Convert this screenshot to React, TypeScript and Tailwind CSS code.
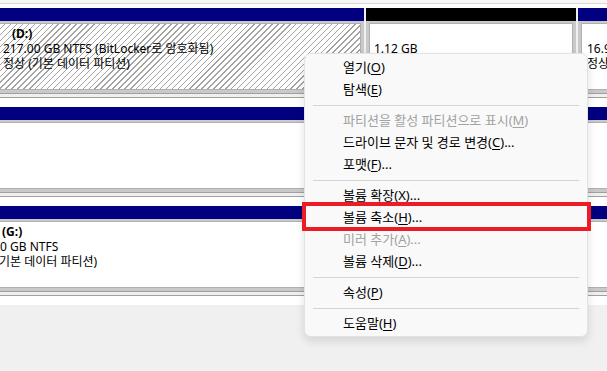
import React from "react";

const font = "font-['Noto_Sans','Noto_Sans_CJK_KR',sans-serif]";

function Partition({
  bar,
  className = "",
  hatched = false,
  children,
}: {
  bar: string;
  className?: string;
  hatched?: boolean;
  children?: React.ReactNode;
}) {
  return (
    <div className={`flex flex-col ${className}`}>
      <div className={`h-[13px] ${bar}`} />
      <div className="flex h-[72px] flex-col bg-[#c9c9c9] px-[3px] pt-[2px] pb-[3px]">
        <div
          className={`flex-1 overflow-hidden border border-[#b0b0b0] ${
            hatched
              ? "bg-[repeating-linear-gradient(135deg,#fff_0px,#fff_3.2px,#a2a2a2_3.2px,#a2a2a2_4.2px)]"
              : "bg-white"
          }`}
        >
          {children}
        </div>
      </div>
    </div>
  );
}

function DiskRow({ children }: { children: React.ReactNode }) {
  return (
    <div className="flex flex-col">
      <div className="flex gap-[2px] overflow-hidden">{children}</div>
      <div className="h-px bg-[#a0a0a0]" />
      <div className="h-[3px] bg-[#f0f0f0]" />
      <div className="h-px bg-[#a0a0a0]" />
      <div className="h-[9px] bg-white" />
    </div>
  );
}

function Lines({ lines, className = "" }: { lines: React.ReactNode[]; className?: string }) {
  return (
    <div className={`pt-[2px] text-[12px] leading-[15px] whitespace-nowrap text-black ${className}`}>
      {lines.map((l, i) => (
        <div key={i} className="h-[15px] overflow-visible">
          {l}
        </div>
      ))}
    </div>
  );
}

type Item = { label: string; key: string; after?: string; disabled?: boolean } | "sep";

const items: Item[] = [
  { label: "열기", key: "O" },
  { label: "탐색", key: "E" },
  "sep",
  { label: "파티션을 활성 파티션으로 표시", key: "M", disabled: true },
  { label: "드라이브 문자 및 경로 변경", key: "C", after: "..." },
  { label: "포맷", key: "F", after: "..." },
  "sep",
  { label: "볼륨 확장", key: "X", after: "..." },
  { label: "볼륨 축소", key: "H", after: "..." },
  { label: "미러 추가", key: "A", after: "...", disabled: true },
  { label: "볼륨 삭제", key: "D", after: "..." },
  "sep",
  { label: "속성", key: "P" },
  "sep",
  { label: "도움말", key: "H" },
];

function ContextMenu() {
  return (
    <div className="absolute left-[304px] top-[53px] w-[284px] rounded-[7px] border border-[#e3e3e3] bg-[#f9f9f9] pt-[3px] pb-[1px] shadow-[0_4px_10px_rgba(0,0,0,0.12)]">
      {items.map((it, i) =>
        it === "sep" ? (
          <div key={i} className="flex h-[9px] items-center px-[8px]">
            <div className="h-px w-full bg-[#d5d5d5]" />
          </div>
        ) : (
          <div
            key={i}
            className={`flex h-[22px] items-center pl-[38px] text-[13px] ${
              it.disabled ? "text-[#a2a2a2]" : "text-black"
            }`}
          >
            {it.label}(
            <span className="underline decoration-1 underline-offset-[2px]">{it.key}</span>)
            {it.after}
          </div>
        )
      )}
    </div>
  );
}

export default function App() {
  return (
    <div className={`relative h-[371px] w-[607px] overflow-hidden bg-[#f0f0f0] ${font}`}>
      <div className="h-[3px] bg-[#f7f7f7]" />
      <div className="h-px bg-[#d8d8d8]" />
      <div className="h-[4px] bg-white" />

      <DiskRow>
        <Partition bar="bg-[#000080]" hatched className="-ml-[4px] w-[368px] shrink-0">
          <Lines
            className="pl-[3px]"
            lines={[
              <span className="pl-[9px] font-bold">(D:)</span>,
              "217.00 GB NTFS (BitLocker로 암호화됨)",
              "정상 (기본 데이터 파티션)",
            ]}
          />
        </Partition>
        <Partition bar="bg-black" className="w-[210px] shrink-0">
          <Lines className="pl-[4px]" lines={["", "1.12 GB"]} />
        </Partition>
        <Partition bar="bg-[#000080]" className="w-[40px] shrink-0">
          <Lines className="pl-[5px]" lines={["", "16.9", "정상"]} />
        </Partition>
      </DiskRow>

      <DiskRow>
        <Partition bar="bg-[#000080]" className="-mx-[4px] flex-1" />
      </DiskRow>

      <DiskRow>
        <Partition bar="bg-[#000080]" className="-mx-[4px] flex-1">
          <Lines
            className="pl-[2px]"
            lines={[
              <span className="font-bold">(G:)</span>,
              <span className="-ml-[2px]">0 GB NTFS</span>,
              <span className="-ml-[3px]">기본 데이터 파티션)</span>,
            ]}
          />
        </Partition>
      </DiskRow>

      <ContextMenu />

      <div className="absolute left-[302px] top-[202px] h-[29px] w-[289px] border-4 border-[#ed1c24]" />
    </div>
  );
}
